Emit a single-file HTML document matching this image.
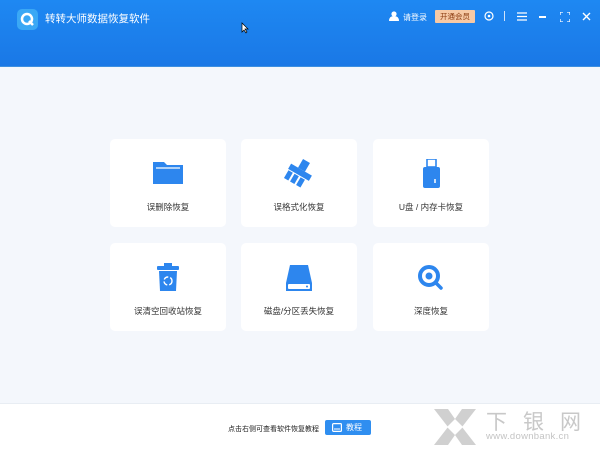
<!DOCTYPE html>
<html><head><meta charset="utf-8"><style>
*{margin:0;padding:0;box-sizing:border-box}
body{width:600px;height:450px;overflow:hidden;background:#f4f7fc;font-family:"Liberation Sans","Noto Sans CJK SC",sans-serif;position:relative}
.hdr{position:absolute;left:0;top:0;width:600px;height:67px;background:linear-gradient(#1e88f2,#1a78e6);border-bottom:1px solid #3d8fe0}
.logo{position:absolute;left:17px;top:9px;width:21px;height:21px;border-radius:5px;background:#3aa8f5}
.title{position:absolute;left:45px;top:11px;color:#fff;font-size:10.5px}
.hr{position:absolute;top:10px;color:#fff;font-size:8px}
.vip{position:absolute;left:435px;top:10px;width:40px;height:13px;background:#f6c9a5;color:#8a3b10;font-size:7.5px;text-align:center;line-height:13px;border-radius:1px}
.card{position:absolute;width:116px;height:88px;background:#fff;border-radius:5px}
.card svg{position:absolute;left:40px;top:20px}
.card span{position:absolute;left:0;right:0;top:62px;text-align:center;font-size:8.5px;color:#333}
.ftr{position:absolute;left:0;top:403px;width:600px;height:47px;background:#fff;border-top:1px solid #e8edf3}
</style></head><body>
<div class="hdr">
<div class="logo"><svg width="21" height="21"><circle cx="10" cy="10" r="5" fill="none" stroke="#fff" stroke-width="2.5"/><path d="M12 12l4 4" stroke="#fff" stroke-width="2.5"/></svg></div>
<div class="title">转转大师数据恢复软件</div>
<svg style="position:absolute;left:389px;top:11px" width="10" height="10"><circle cx="5" cy="3" r="2.6" fill="#fff"/><path d="M0 10q0-5 5-5t5 5z" fill="#fff"/></svg>
<div class="hr" style="left:403px;top:12px">请登录</div>
<div class="vip">开通会员</div>
<svg style="position:absolute;left:484px;top:11px;" width="10" height="10"><circle cx="5" cy="5" r="4" fill="none" stroke="#fff" stroke-width="1.2"/><circle cx="5" cy="5" r="1.3" fill="#fff"/></svg>
<div style="position:absolute;left:504px;top:11px;width:1px;height:10px;background:#cfe3fa"></div>
<svg style="position:absolute;left:517px;top:12px" width="10" height="9"><path d="M0 1h10M0 4.5h10M0 8h10" stroke="#fff" stroke-width="1.3"/></svg>
<div style="position:absolute;left:539px;top:16px;width:7px;height:1.5px;background:#fff"></div>
<svg style="position:absolute;left:560px;top:12px" width="10" height="10"><path d="M0 3V0h3M7 0h3v3M10 7v3H7M3 10H0V7" fill="none" stroke="#fff" stroke-width="1.3"/></svg>
<svg style="position:absolute;left:582px;top:12px" width="9" height="9"><path d="M1 1l7 7M8 1L1 8" stroke="#fff" stroke-width="1.4"/></svg>
<svg style="position:absolute;left:241px;top:22px" width="8" height="12"><path d="M1 1v9l2-2 2 3 1-1-2-3h3z" fill="#fff" stroke="#000" stroke-width=".7"/></svg>
</div>

<div class="card" style="left:110px;top:139px"><svg width="36" height="30"><path d="M3 3h11l3 3h16v19H3z" fill="#2d86ee"/><path d="M6 9h24" stroke="#fff" stroke-width="1.3"/></svg><span>误删除恢复</span></div>
<div class="card" style="left:241px;top:139px"><svg width="36" height="30"><g transform="rotate(30 18 15)" fill="#2d86ee"><rect x="14" y="0" width="8" height="10"/><rect x="6" y="10" width="24" height="6"/><rect x="7" y="17" width="5" height="9"/><rect x="14" y="17" width="5" height="9"/><rect x="21" y="17" width="5" height="9"/></g></svg><span>误格式化恢复</span></div>
<div class="card" style="left:373px;top:139px"><svg width="36" height="30"><rect x="14" y="0" width="9" height="8" fill="none" stroke="#2d86ee" stroke-width="1.6"/><rect x="10" y="8" width="17" height="21" rx="2" fill="#2d86ee"/><path d="M22 20v4" stroke="#fff" stroke-width="1.5"/></svg><span>U盘 / 内存卡恢复</span></div>
<div class="card" style="left:110px;top:243px"><svg width="36" height="30"><rect x="14" y="0" width="8" height="3" fill="#2d86ee"/><rect x="7" y="3" width="22" height="4" rx="1" fill="#2d86ee"/><path d="M9 8h18l-1 20H10z" fill="#2d86ee"/><circle cx="18" cy="18" r="4" fill="none" stroke="#fff" stroke-width="1.4" stroke-dasharray="5 2"/></svg><span>误清空回收站恢复</span></div>
<div class="card" style="left:241px;top:243px"><svg width="36" height="32"><path d="M9 2h18l4 18v8H5v-8z" fill="#2d86ee"/><rect x="7" y="21" width="22" height="5" rx="1" fill="#fff"/><circle cx="26" cy="23.5" r="1" fill="#2d86ee"/></svg><span>磁盘/分区丢失恢复</span></div>
<div class="card" style="left:373px;top:243px"><svg width="36" height="30"><circle cx="16" cy="13" r="9" fill="none" stroke="#2d86ee" stroke-width="4"/><circle cx="16" cy="13" r="3.5" fill="#2d86ee"/><path d="M23 20l5 5" stroke="#2d86ee" stroke-width="3.5" stroke-linecap="round"/></svg><span>深度恢复</span></div>

<div class="ftr">
<div style="position:absolute;left:228px;top:20px;font-size:7px;color:#222;white-space:nowrap;width:93px;overflow:hidden">点击右侧可查看软件恢复教程</div>
<div style="position:absolute;left:325px;top:16px;width:46px;height:15px;background:#2f8ef0;border-radius:2px;color:#fff;font-size:8px;line-height:15px;padding-left:21px">教程</div>
<svg style="position:absolute;left:332px;top:19px" width="10" height="9"><rect x=".6" y=".6" width="8.8" height="7.8" rx="1" fill="none" stroke="#fff" stroke-width="1.2"/><path d="M2 6h6" stroke="#fff"/></svg>
<svg style="position:absolute;left:434px;top:3px" width="42" height="40"><path d="M0 2h14l7 10 7-10h14L28 20l14 18H28l-7-10-7 10H0l14-18z" fill="#d0d0d0"/><path d="M21 12l8 8-8 8-8-8z" fill="#fff"/></svg>
<div style="position:absolute;left:486px;top:2px;font-size:21px;color:#c8c8c8;letter-spacing:16px">下银网</div>
<div style="position:absolute;left:486px;top:27px;font-size:9.5px;color:#c4c4c4;letter-spacing:.3px">www.downbank.cn</div>
</div>
</body></html>
